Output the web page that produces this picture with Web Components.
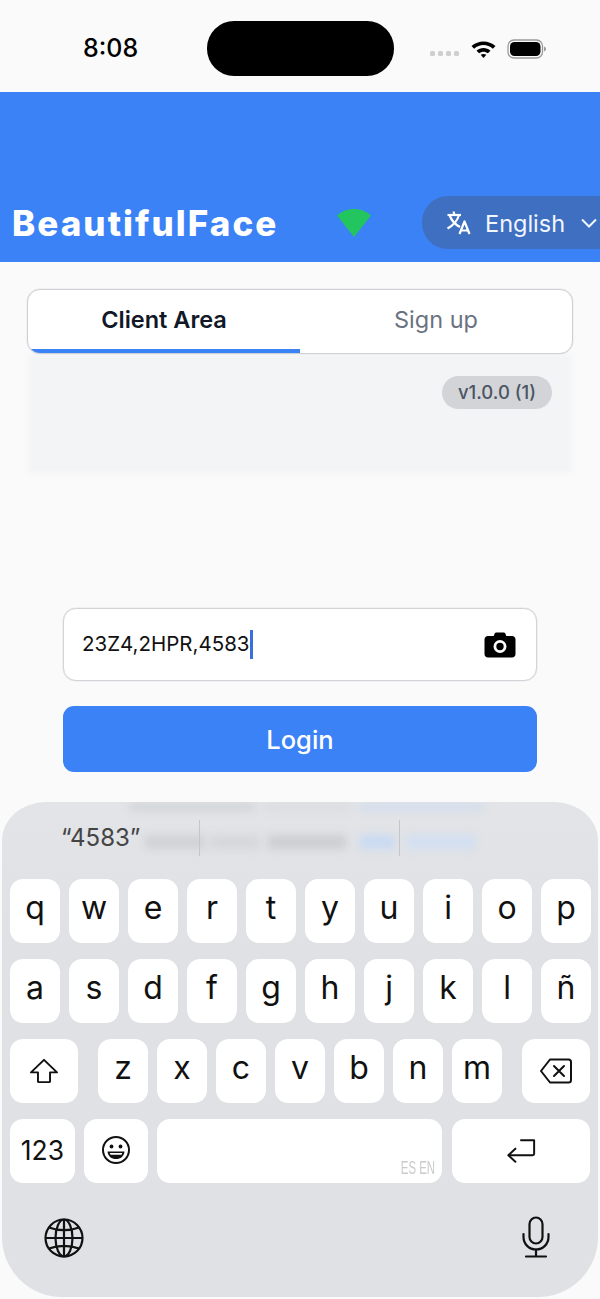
<!DOCTYPE html>
<html>
<head>
<meta charset="utf-8">
<title>BeautifulFace</title>
<style>
  html, body { margin: 0; padding: 0; background: #fafafa; }
  body { width: 600px; height: 1299px; overflow: hidden; font-family: Inter, Roboto, sans-serif; }
</style>
</head>
<body>
<app-screen>
  <status-bar></status-bar>
  <app-header></app-header>
  <tab-panel></tab-panel>
  <login-form></login-form>
  <ios-keyboard></ios-keyboard>
</app-screen>
<script>
(function () {
  class AppScreen extends HTMLElement {
    constructor() {
      super();
      this.attachShadow({ mode: 'open' });
      this.shadowRoot.innerHTML = `
        <style>
          :host { display: flex; flex-direction: column; position: relative; width: 600px; height: 1299px; background: #fafafa; overflow: hidden; }
        </style>
        <slot></slot>`;
    }
  }

  class StatusBar extends HTMLElement {
    constructor() {
      super();
      this.attachShadow({ mode: 'open' });
      this.shadowRoot.innerHTML = `
        <style>
          :host { display: block; height: 92px; background: #fafafa; flex: none; }
          .row { display: flex; align-items: center; height: 96px; }
          .time { margin-left: 83px; width: 124px; padding-top: 1px; font: 500 25px/1 Inter, sans-serif; color: #000; }
          .island { width: 187px; height: 55px; border-radius: 27px; background: #000; }
          .dots { display: flex; gap: 3px; margin-left: 36px; margin-top: 11px; }
          .dots i { width: 5px; height: 5px; border-radius: 1.5px; background: #cfcfcf; }
          .wifi { margin-left: 12px; margin-top: 1px; }
          .batt { margin-left: 11px; margin-top: 1px; }
        </style>
        <div class="row">
          <span class="time">8:08</span>
          <div class="island"></div>
          <div class="dots"><i></i><i></i><i></i><i></i></div>
          <svg class="wifi" width="25" height="20" viewBox="0 0 24 20">
            <path d="M0 7 C7 1 17 1 24 7 L21.4 9.8 C15.6 4.8 8.4 4.8 2.6 9.8 Z" fill="#000"/>
            <path d="M5 11.7 C9 8.2 15 8.2 19 11.7 L16.4 14.3 C13.8 12.1 10.2 12.1 7.6 14.3 Z" fill="#000"/>
            <path d="M9.2 15.8 C10.9 14.6 13.1 14.6 14.8 15.8 L12 19 Z" fill="#000"/>
          </svg>
          <svg class="batt" width="39" height="20" viewBox="0 0 39 20">
            <rect x="1" y="1" width="34.5" height="18" rx="6" fill="none" stroke="#9a9a9a" stroke-width="1.3"/>
            <rect x="3" y="3" width="30.5" height="14" rx="4.5" fill="#000"/>
            <path d="M37 7.5 C38.3 8 39 9 39 10 C39 11 38.3 12 37 12.5 Z" fill="#9a9a9a"/>
          </svg>
        </div>`;
    }
  }

  class AppHeader extends HTMLElement {
    constructor() {
      super();
      this.attachShadow({ mode: 'open' });
      this.shadowRoot.innerHTML = `
        <style>
          :host { display: flex; align-items: flex-end; height: 170px; background: #3b82f6; flex: none; overflow: hidden; }
          .row { display: flex; align-items: center; height: 53px; margin-bottom: 13px; }
          .brand { margin-left: 12px; width: 325px; padding-top: 2px; font: 800 35px/1 Inter, sans-serif; letter-spacing: 2.05px; color: #fff; white-space: nowrap; }
          .signal { width: 85px; flex: none; display: block; }
          .lang { display: flex; align-items: center; width: 200px; height: 53px; flex: none; border-radius: 26px 0 0 26px; background: #3f6fc0; color: #fff; }
          .lang svg { flex: none; }
          .tr { margin-left: 24px; }
          .name { margin-left: 13px; padding-top: 2px; font: 400 23.5px/1 Inter, sans-serif; color: #f2f6ff; }
          .chev { margin-left: 16px; }
        </style>
        <div class="row">
          <span class="brand">BeautifulFace</span>
          <svg class="signal" width="85" height="30" viewBox="0 0 85 30">
            <path d="M0 7.5 C5 3 11 1 17 1 C23 1 29 3 34 7.5 L17 29 Z" fill="#22c55e"/>
          </svg>
          <div class="lang">
            <svg class="tr" width="26" height="26" viewBox="0 0 26 26" fill="none" stroke="#fff" stroke-width="2.2" stroke-linejoin="round">
              <path d="M1.5 5 H15"/>
              <path d="M7.5 1.5 L8.5 5"/>
              <path d="M13 5 C11.5 10.5 7 15.5 1.5 18.5"/>
              <path d="M3.5 5 C5.5 10.5 9 14.5 14 17"/>
              <path d="M13.5 24 L18.5 11.5 L23.5 24 M15 20.5 H22"/>
            </svg>
            <span class="name">English</span>
            <svg class="chev" width="16" height="10" viewBox="0 0 16 10" fill="none" stroke="#f2f6ff" stroke-width="2"><path d="M1 1.5 L8 8.5 L15 1.5"/></svg>
          </div>
        </div>`;
    }
  }

  class TabPanel extends HTMLElement {
    constructor() {
      super();
      this.attachShadow({ mode: 'open' });
      this.shadowRoot.innerHTML = `
        <style>
          :host { display: block; margin: 27px 27px 0; flex: none; }
          .tabs { position: relative; z-index: 1; display: flex; height: 63px; background: #fff; border: 1px solid #cfd0d3; border-radius: 13px; box-shadow: 0 0 0 .5px #e6e7e9; overflow: hidden; }
          .tab { flex: 1; display: flex; align-items: center; justify-content: center; box-sizing: border-box; padding-bottom: 4px; font: 400 23.5px/1 Inter, sans-serif; color: #6b7280; }
          .tab.on { font-weight: 600; color: #111827; border-bottom: 4px solid #3b82f6; padding-bottom: 0; }
          .body { position: relative; display: flex; justify-content: flex-end; align-items: flex-start; height: 120px; box-sizing: border-box; padding: 22px 21px 0 0; }
          .body::before { content: ""; position: absolute; inset: 0 1px 1px; background: #f3f4f6; filter: blur(2px); }
          .ver { position: relative; display: flex; align-items: center; justify-content: center; width: 110px; height: 33px; border-radius: 17px; background: #d2d4d8; font: 500 18.5px/1 Inter, sans-serif; color: #4b5563; }
        </style>
        <div class="tabs">
          <div class="tab on">Client Area</div>
          <div class="tab">Sign up</div>
        </div>
        <div class="body"><span class="ver">v1.0.0 (1)</span></div>`;
    }
  }

  class LoginForm extends HTMLElement {
    constructor() {
      super();
      this.attachShadow({ mode: 'open' });
      this.shadowRoot.innerHTML = `
        <style>
          :host { display: flex; flex-direction: column; gap: 25px; margin: 134px 63px 0; flex: none; }
          .field { display: flex; align-items: center; height: 73px; box-sizing: border-box; padding: 0 20px 0 18px; background: #fff; border: 1px solid #d2d3d6; border-radius: 13px; box-shadow: 0 0 0 .5px #e6e7e9; }
          .val { font: 400 20.5px/1 Inter, sans-serif; color: #111; }
          .caret { flex: none; width: 3px; height: 29px; background: #3b6fe0; }
          .cam { margin-left: auto; }
          .btn { display: flex; align-items: center; justify-content: center; height: 66px; box-sizing: border-box; padding-top: 2px; border-radius: 11px; background: #3b82f6; font: 500 25.5px/1 Inter, sans-serif; color: #fff; }
        </style>
        <div class="field">
          <span class="val">23Z4,2HPR,4583</span><span class="caret"></span>
          <svg class="cam" width="32" height="26" viewBox="0 0 32 26">
            <path fill="#000" fill-rule="evenodd" d="M10.5 2 C10.8 1 11.5 .5 12.5 .5 H19.5 C20.5 .5 21.2 1 21.5 2 L22.3 4 H28 C30 4 31.5 5.5 31.5 7.5 V22 C31.5 24 30 25.5 28 25.5 H4 C2 25.5 .5 24 .5 22 V7.5 C.5 5.5 2 4 4 4 H9.7 Z M16 8 A6.5 6.5 0 1 0 16 21 A6.5 6.5 0 1 0 16 8 Z M16 10.8 A3.7 3.7 0 1 1 16 18.2 A3.7 3.7 0 1 1 16 10.8 Z"/>
          </svg>
        </div>
        <div class="btn">Login</div>`;
    }
  }

  class KbKey extends HTMLElement {
    constructor() {
      super();
      this.attachShadow({ mode: 'open' });
      this.shadowRoot.innerHTML = `
        <style>
          :host { display: flex; align-items: center; justify-content: center; position: relative; flex: none; width: var(--w, 50px); height: 64px; box-sizing: border-box; padding-bottom: var(--pb, 6px); background: #fff; border-radius: 13px; font: 400 32px/1 Inter, Roboto, sans-serif; color: #111; }
        </style>
        <slot></slot>`;
    }
  }

  class IosKeyboard extends HTMLElement {
    constructor() {
      super();
      this.attachShadow({ mode: 'open' });
      const row = keys => keys.split('').map(k => `<kb-key>${k}</kb-key>`).join('');
      this.shadowRoot.innerHTML = `
        <style>
          :host { display: block; position: absolute; left: 2px; right: 2px; top: 802px; height: 495px; background: linear-gradient(#e2e4e7, #dfe1e4 30%); border-radius: 44px 44px 60px 60px / 38px 38px 60px 60px; overflow: hidden; }
          .blur { position: absolute; inset: 0; filter: blur(4px); }
          .blur div { position: absolute; }
          .sugg { position: relative; display: flex; height: 77px; }
          .sugg > div { display: flex; align-items: center; height: 36px; margin-top: 18px; }
          .w { font: 400 24px/1 Inter, sans-serif; color: #444; padding-left: 59px; width: 197px; box-sizing: border-box; }
          .sep { width: 1px; background: #c4c6ca; }
          .gap { width: 199px; }
          .keys { position: relative; display: flex; flex-direction: column; gap: 16px; }
          .row { display: flex; gap: 9px; padding: 0 8px; }
          .bar { position: relative; display: flex; justify-content: space-between; align-items: flex-start; padding: 35px 0 0 42px; }
          .mic { margin-right: 48px; margin-top: -2px; }
          .tag { position: absolute; right: 7px; bottom: 6px; font: 400 19px/1 "Liberation Sans", sans-serif; color: #c9cacc; transform: scaleX(.6); transform-origin: right; white-space: nowrap; }
        </style>
        <div class="blur">
          <div style="left:128px;top:2px;width:125px;height:6px;background:#cdd0d4"></div>
          <div style="left:263px;top:2px;width:85px;height:6px;background:#d8dade"></div>
          <div style="left:358px;top:2px;width:122px;height:6px;background:#cfdcf0"></div>
          <div style="left:143px;top:33px;width:60px;height:14px;background:#d0d2d6"></div>
          <div style="left:208px;top:33px;width:50px;height:14px;background:#d5d7db"></div>
          <div style="left:266px;top:33px;width:78px;height:14px;background:#cccED2"></div>
          <div style="left:358px;top:33px;width:35px;height:14px;background:#c9daf2"></div>
          <div style="left:405px;top:33px;width:68px;height:14px;background:#d2dff2"></div>
        </div>
        <div class="sugg">
          <div class="w"><span>“4583”</span></div>
          <div class="sep"></div>
          <div class="gap"></div>
          <div class="sep"></div>
        </div>
        <div class="keys">
          <div class="row">${row('qwertyuiop')}</div>
          <div class="row">${row('asdfghjklñ')}</div>
          <div class="row">
            <kb-key style="--w:68px;--pb:0">
              <svg width="30" height="26" viewBox="0 0 32 28" fill="none" stroke="#111" stroke-width="2.1" stroke-linejoin="round"><path d="M16 2 L30 15.5 H22.5 V25 C22.5 25.6 22 26 21.5 26 H10.5 C10 26 9.5 25.6 9.5 25 V15.5 H2 Z"/></svg>
            </kb-key>
            <kb-key style="margin-left:11px">z</kb-key><kb-key>x</kb-key><kb-key>c</kb-key><kb-key>v</kb-key><kb-key>b</kb-key><kb-key>n</kb-key><kb-key>m</kb-key>
            <kb-key style="--w:68px;--pb:0;margin-left:11px">
              <svg width="32" height="26" viewBox="0 0 32 26" fill="none" stroke="#111" stroke-width="2" stroke-linejoin="round" stroke-linecap="round"><path d="M10 1.5 H28.5 C30 1.5 31 2.5 31 4 V22 C31 23.5 30 24.5 28.5 24.5 H10 L1 13 Z"/><path d="M14 8 L24 18 M24 8 L14 18"/></svg>
            </kb-key>
          </div>
          <div class="row">
            <kb-key style="--w:65px;font-size:26.5px;--pb:2px">123</kb-key>
            <kb-key style="--w:64px;--pb:2px">
              <svg width="30" height="30" viewBox="0 0 30 30" fill="none" stroke="#111" stroke-width="2"><circle cx="15" cy="15" r="13"/><circle cx="10.5" cy="11.5" r="1.9" fill="#111" stroke="none"/><circle cx="19.5" cy="11.5" r="1.9" fill="#111" stroke="none"/><path d="M6.5 16.5 H23.5 C23 21.5 19.5 24 15 24 C10.5 24 7 21.5 6.5 16.5 Z" fill="#111" stroke="none"/><path d="M8.8 18 H21.2 L20.5 19.8 H9.5 Z" fill="#fff" stroke="none"/></svg>
            </kb-key>
            <kb-key style="--w:285px;--pb:0">
              <span class="tag">ES EN</span>
            </kb-key>
            <kb-key style="--w:138px;--pb:0;margin-left:1px">
              <svg width="30" height="26" viewBox="0 0 32 26" fill="none" stroke="#111" stroke-width="2.1" stroke-linecap="round" stroke-linejoin="round"><path d="M16 1.5 H30 V16 C30 17 29.5 17.5 28.5 17.5 H3"/><path d="M10 10.5 L2.5 17.5 L10 24.5"/></svg>
            </kb-key>
          </div>
        </div>
        <div class="bar">
          <svg width="40" height="40" viewBox="0 0 40 40" fill="none" stroke="#111" stroke-width="2.2"><circle cx="20" cy="20" r="18.5"/><ellipse cx="20" cy="20" rx="8.5" ry="18.5"/><path d="M20 1.5 V38.5 M1.5 20 H38.5 M5 9.5 C14 13 26 13 35 9.5 M5 30.5 C14 27 26 27 35 30.5"/></svg>
          <svg class="mic" width="28" height="42" viewBox="0 0 28 42" fill="none" stroke="#111" stroke-width="2.2" stroke-linecap="round"><rect x="7.5" y="1.5" width="13" height="26" rx="6.5"/><path d="M1.5 18 V21 C1.5 28 7 33.5 14 33.5 C21 33.5 26.5 28 26.5 21 V18"/><path d="M14 33.5 V40.5 M4 40.5 H24"/></svg>
        </div>`;
    }
  }

  customElements.define('app-screen', AppScreen);
  customElements.define('status-bar', StatusBar);
  customElements.define('app-header', AppHeader);
  customElements.define('tab-panel', TabPanel);
  customElements.define('login-form', LoginForm);
  customElements.define('kb-key', KbKey);
  customElements.define('ios-keyboard', IosKeyboard);
})();
</script>
</body>
</html>
